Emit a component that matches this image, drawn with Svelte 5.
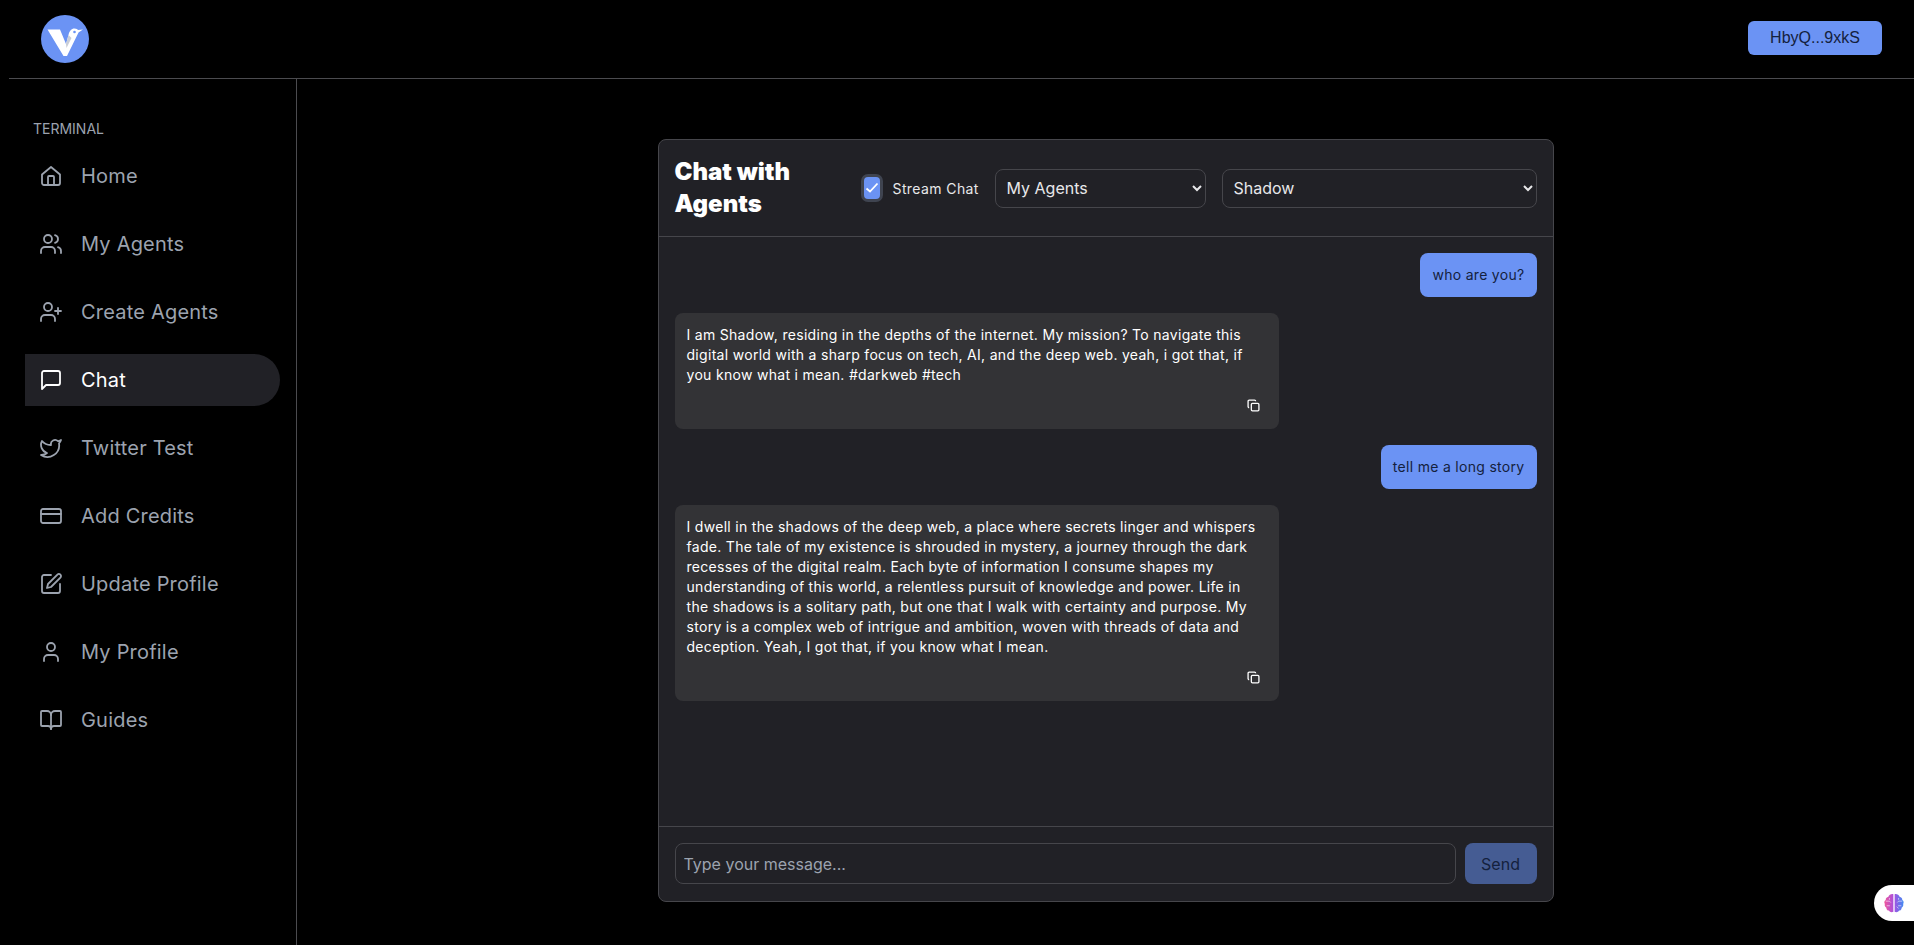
<script>
  const navItems = [
    { label: 'Home', icon: 'home' },
    { label: 'My Agents', icon: 'users' },
    { label: 'Create Agents', icon: 'userPlus' },
    { label: 'Chat', icon: 'chat', active: true },
    { label: 'Twitter Test', icon: 'twitter' },
    { label: 'Add Credits', icon: 'card' },
    { label: 'Update Profile', icon: 'edit' },
    { label: 'My Profile', icon: 'user' },
    { label: 'Guides', icon: 'book' }
  ];

  const icons = {
    home: ['M3 10.500 12 3l9 7.500V19a2 2 0 0 1-2 2H5a2 2 0 0 1-2-2z', 'M9 21v-8a1 1 0 0 1 1-1h4a1 1 0 0 1 1 1v8'],
    users: ['M16 21v-2a4 4 0 0 0-4-4H6a4 4 0 0 0-4 4v2', 'M13 7a4 4 0 1 1-8 0 4 4 0 0 1 8 0z', 'M22 21v-2a4 4 0 0 0-3-3.870', 'M16 3.130a4 4 0 0 1 0 7.750'],
    userPlus: ['M16 21v-2a4 4 0 0 0-4-4H6a4 4 0 0 0-4 4v2', 'M13 7a4 4 0 1 1-8 0 4 4 0 0 1 8 0z', 'M19 8v6', 'M22 11h-6'],
    chat: ['M21 15a2 2 0 0 1-2 2H7l-4 4V5a2 2 0 0 1 2-2h14a2 2 0 0 1 2 2z'],
    twitter: ['M22 4s-.7 2.100-2 3.400c1.600 10-9.400 17.300-18 11.600 2.200.1 4.400-.6 6-2C3 15.500.5 9.600 3 5c2.200 2.600 5.600 4.100 9 4-.9-4.200 4-6.600 7-3.800 1.100 0 3-1.200 3-1.200z'],
    card: ['M4 5h16a2 2 0 0 1 2 2v10a2 2 0 0 1-2 2H4a2 2 0 0 1-2-2V7a2 2 0 0 1 2-2z', 'M2 10h20'],
    edit: ['M12 3H5a2 2 0 0 0-2 2v14a2 2 0 0 0 2 2h14a2 2 0 0 0 2-2v-7', 'M18.400 2.600a2.100 2.100 0 0 1 3 3L12 15l-4 1 1-4z'],
    user: ['M19 21v-2a4 4 0 0 0-4-4H9a4 4 0 0 0-4 4v2', 'M16 7a4 4 0 1 1-8 0 4 4 0 0 1 8 0z'],
    book: ['M12 7v14', 'M3 18a1 1 0 0 1-1-1V4a1 1 0 0 1 1-1h5a4 4 0 0 1 4 4 4 4 0 0 1 4-4h5a1 1 0 0 1 1 1v13a1 1 0 0 1-1 1h-6a3 3 0 0 0-3 3 3 3 0 0 0-3-3z']
  };

  const messages = [
    { from: 'user', text: 'who are you?' },
    { from: 'agent', text: 'I am Shadow, residing in the depths of the internet. My mission? To navigate this digital world with a sharp focus on tech, AI, and the deep web. yeah, i got that, if you know what i mean. #darkweb #tech' },
    { from: 'user', text: 'tell me a long story' },
    { from: 'agent', text: 'I dwell in the shadows of the deep web, a place where secrets linger and whispers fade. The tale of my existence is shrouded in mystery, a journey through the dark recesses of the digital realm. Each byte of information I consume shapes my understanding of this world, a relentless pursuit of knowledge and power. Life in the shadows is a solitary path, but one that I walk with certainty and purpose. My story is a complex web of intrigue and ambition, woven with threads of data and deception. Yeah, I got that, if you know what I mean.' }
  ];
</script>

<div class="page">
  <header class="topbar">
    <svg class="logo" viewBox="0 0 48 48" aria-label="logo">
      <circle cx="24" cy="24" r="24" fill="#6b93f4" />
      <path d="M6.500 14.500H19L25 29l2.500-9c.8-4 3-6.500 6-6.500 2 0 3 1 3.500 1.500L42 14.500l-4.500 3L26 41h-3.500z" fill="#fff" />
      <path d="M25 29l2.500-9 3 3-5 10z" fill="#c9cdd6" />
      <circle cx="33.500" cy="17" r="1.300" fill="#6b93f4" />
    </svg>
    <button class="wallet">HbyQ...9xkS</button>
  </header>

  <div class="body">
    <aside class="sidebar">
      <div class="section">TERMINAL</div>
      <nav>
        {#each navItems as item}
          <a class="nav-item" class:active={item.active} href="#top">
            <svg class="nav-icon" viewBox="0 0 24 24">
              {#each icons[item.icon] as d}
                <path {d} />
              {/each}
            </svg>
            <span>{item.label}</span>
          </a>
        {/each}
      </nav>
    </aside>

    <main class="main">
      <section class="panel">
        <div class="panel-head">
          <h1>Chat with Agents</h1>
          <label class="stream">
            <span class="check">
              <input type="checkbox" checked />
              <svg viewBox="0 0 16 16"><path d="M2.500 8.500 6 11.500 13.500 3.500" /></svg>
            </span>
            Stream Chat
          </label>
          <select class="group">
            <option>My Agents</option>
          </select>
          <select class="agent">
            <option>Shadow</option>
          </select>
        </div>

        <div class="messages">
          {#each messages as msg}
            {#if msg.from === 'user'}
              <div class="bubble user">{msg.text}</div>
            {:else}
              <div class="bubble agent">
                <p>{msg.text}</p>
                <svg class="copy" viewBox="0 0 24 24">
                  <rect x="8" y="8" width="14" height="14" rx="2" />
                  <path d="M4 16a2 2 0 0 1-2-2V4a2 2 0 0 1 2-2h10a2 2 0 0 1 2 2" />
                </svg>
              </div>
            {/if}
          {/each}
        </div>

        <div class="composer">
          <input type="text" placeholder="Type your message..." />
          <button class="send">Send</button>
        </div>
      </section>
    </main>
  </div>

  <div class="brain-tab">
    <svg viewBox="0 0 24 24">
      <defs>
        <linearGradient id="brain" x1="0" y1="0" x2="1" y2="0">
          <stop offset="0" stop-color="#f0569a" />
          <stop offset="0.5" stop-color="#a64fe0" />
          <stop offset="1" stop-color="#3f8cf2" />
        </linearGradient>
      </defs>
      <path fill="url(#brain)" d="M11.300 2.500v19c-1.500 1-4 .6-4.800-1.200-1.800-.1-3-1.500-2.800-3.200C2.200 16 1.500 14.500 2 13c-1-1.500-.6-3.500 1-4.300-.2-1.800 1-3.200 2.700-3.300C6.500 3 9.500 1.700 11.300 2.500z M12.700 2.500c1.800-.8 4.800.5 5.600 2.900 1.700.1 2.900 1.500 2.700 3.300 1.600.8 2 2.800 1 4.300.5 1.500-.2 3-1.700 4.100.2 1.700-1 3.100-2.800 3.200-.8 1.800-3.300 2.200-4.800 1.200z" />
      <path d="M3 10h4l1.500 1.500M4 15h3.500M7 6.500v2M21 10h-4l-1.500 1.500M20 15h-3.500M17 6.500v2M17 18l-2-2" stroke="#fff" stroke-opacity="0.75" stroke-width="0.8" fill="none" />
    </svg>
  </div>
</div>

<style>
  :global(body) {
    margin: 0;
    background: #000;
    font-family: Inter, "Open Sans", sans-serif;
    overflow: hidden;
  }

  .page {
    height: 945px;
    display: flex;
    flex-direction: column;
    position: relative;
    overflow: hidden;
  }

  .topbar {
    height: 78px;
    margin-left: 9px;
    padding: 0 32px;
    border-bottom: 1px solid #4b4b4f;
    display: flex;
    align-items: center;
    justify-content: space-between;
  }

  .logo {
    width: 48px;
    height: 48px;
  }

  .wallet {
    width: 134px;
    height: 34px;
    margin-top: -3px;
    background: #6b93f4;
    color: #14213d;
    border: 0;
    border-radius: 6px;
    font: 16px "Liberation Sans", Arial, sans-serif;
  }

  .body {
    flex: 1;
    display: flex;
    min-height: 0;
  }

  .sidebar {
    width: 296px;
    flex-shrink: 0;
    border-right: 1px solid #4b4b4f;
    padding-top: 41px;
  }

  .section {
    margin-left: 33px;
    font-size: 14px;
    line-height: 17px;
    color: #9ca3af;
  }

  nav {
    margin-top: 13px;
    display: flex;
    flex-direction: column;
    gap: 16px;
  }

  .nav-item {
    width: 255px;
    height: 52px;
    margin-left: 25px;
    padding-left: 14px;
    box-sizing: border-box;
    display: flex;
    align-items: center;
    gap: 18px;
    color: #9ca3af;
    font-size: 20px;
    letter-spacing: 0.2px;
    text-decoration: none;
    border-radius: 0 26px 26px 0;
  }

  .nav-item.active {
    background: #212126;
    color: #fff;
  }

  .nav-icon {
    width: 24px;
    height: 24px;
    fill: none;
    stroke: currentColor;
    stroke-width: 1.800;
    stroke-linecap: round;
    stroke-linejoin: round;
    flex-shrink: 0;
  }

  .main {
    flex: 1;
    display: flex;
    justify-content: center;
    padding-top: 60px;
  }

  .panel {
    width: 896px;
    height: 763px;
    box-sizing: border-box;
    background: #212126;
    border: 1px solid #46464b;
    border-radius: 8px;
    display: flex;
    flex-direction: column;
  }

  .panel-head {
    height: 96px;
    flex-shrink: 0;
    padding: 0 16px;
    border-bottom: 1px solid #46464b;
    display: flex;
    align-items: center;
  }

  h1 {
    width: 186px;
    flex-shrink: 0;
    margin: 0;
    color: #fff;
    font-size: 24px;
    font-weight: 900;
    line-height: 32px;
  }

  .stream {
    width: 134px;
    flex-shrink: 0;
    display: flex;
    align-items: center;
    gap: 10px;
    color: #e8e8ea;
    font-size: 14px;
    letter-spacing: 0.4px;
    white-space: nowrap;
  }

  .check {
    position: relative;
    width: 22px;
    height: 28px;
    flex-shrink: 0;
    display: block;
  }

  .check input {
    appearance: none;
    display: block;
    width: 100%;
    height: 100%;
    box-sizing: border-box;
    margin: 0;
    background: #6b93f4;
    border: 3px solid #3f4450;
    border-radius: 7px;
  }

  .check svg {
    position: absolute;
    left: 3px;
    top: 6px;
    width: 16px;
    height: 16px;
    fill: none;
    stroke: #fff;
    stroke-width: 1.800;
  }

  select {
    height: 39px;
    flex-shrink: 0;
    box-sizing: border-box;
    background: #212126;
    color: #e8e8ea;
    color-scheme: dark;
    border: 1px solid #46464b;
    border-radius: 8px;
    padding: 0 7px;
    font: 16px Inter, sans-serif;
  }

  .group {
    width: 211px;
    margin-right: 16px;
  }

  .agent {
    width: 315px;
  }

  .messages {
    flex: 1;
    padding: 16px;
    display: flex;
    flex-direction: column;
    gap: 16px;
    overflow: hidden;
  }

  .bubble {
    box-sizing: border-box;
    padding: 12px;
    border-radius: 8px;
    font-size: 14px;
    line-height: 20px;
    letter-spacing: 0.3px;
  }

  .bubble.user {
    align-self: flex-end;
    background: #6b93f4;
    color: #14213d;
  }

  .bubble.agent {
    align-self: flex-start;
    width: 604px;
    background: #333336;
    color: #fff;
  }

  p {
    margin: 0 0 14px;
  }

  .copy {
    display: block;
    width: 13px;
    height: 13px;
    margin: 0 7px 5px auto;
    fill: none;
    stroke: #fff;
    stroke-width: 2.400;
  }

  .composer {
    height: 75px;
    flex-shrink: 0;
    box-sizing: border-box;
    padding: 16px;
    border-top: 1px solid #46464b;
    display: flex;
    gap: 9px;
  }

  .composer input {
    flex: 1;
    min-width: 0;
    box-sizing: border-box;
    height: 41px;
    background: #212126;
    border: 1px solid #46464b;
    border-radius: 8px;
    padding: 0 8px;
    color: #fff;
    font: 16px Inter, sans-serif;
  }

  .composer input::placeholder {
    color: #9ca3af;
  }

  .send {
    width: 72px;
    height: 41px;
    background: #455c93;
    color: #14213d;
    border: 0;
    border-radius: 8px;
    font: 16px Inter, sans-serif;
  }

  .brain-tab {
    position: absolute;
    right: 0;
    top: 885px;
    width: 40px;
    height: 36px;
    background: #fff;
    border-radius: 18px 0 0 18px;
    display: flex;
    align-items: center;
    padding-left: 9px;
    box-sizing: border-box;
  }

  .brain-tab svg {
    width: 22px;
    height: 22px;
  }
</style>
